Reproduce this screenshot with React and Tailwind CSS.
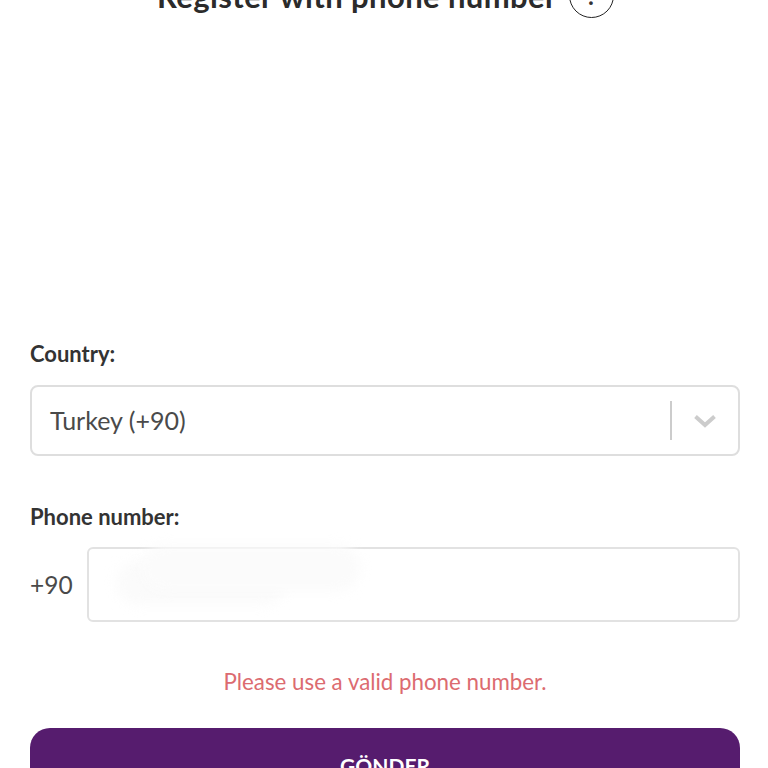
import React from "react";

const App = () => {
  return (
    <div className="h-[768px] overflow-hidden bg-white pr-[28px] pl-[30px] font-['Lato',sans-serif] text-[#333333]">
      <div className="-mt-[28px] flex h-[47px] items-center justify-center gap-[12px] pl-[1px]">
        <h1 className="text-[31px] leading-[36px] font-bold tracking-[0.4px] text-[#2b2b2b]">Register with phone number</h1>
        <div className="flex h-[45px] w-[45px] items-center justify-center rounded-full border-[1.5px] border-[#222222] text-[24px] font-bold">
          ?
        </div>
      </div>

      <label className="mt-[321px] block text-[22px] leading-[28px] font-bold text-[#333333]">Country:</label>
      <div className="mt-[17px] flex h-[71px] items-center rounded-[8px] border-2 border-[#dedede] pl-[18px]">
        <span className="flex-1 text-[25px] text-[#4a4a4a]">Turkey (+90)</span>
        <span className="h-[39px] w-[2px] bg-[#cccccc]"></span>
        <svg className="mx-[21px]" width="24" height="14" viewBox="0 0 24 14" fill="none">
          <path d="M2.5 2.5L12 11L21.5 2.5" stroke="#cccccc" strokeWidth="4" />
        </svg>
      </div>

      <label className="mt-[47px] block text-[22px] leading-[28px] font-bold text-[#333333]">Phone number:</label>
      <div className="relative mt-[16px] flex items-center">
        <span className="w-[57px] pt-[2px] text-[24.5px] text-[#4a4a4a]">+90</span>
        <div className="h-[75px] flex-1 rounded-[6px] border-2 border-[#e2e2e2]"></div>
        {/* smudge over the typed number */}
        <div className="absolute top-[14px] left-[86px] h-[44px] w-[170px] rounded-full bg-[#fbfbfb] blur-[6px]"></div>
        <div className="absolute top-[-2px] left-[112px] h-[46px] w-[218px] rounded-full bg-[#fbfbfb] blur-[6px]"></div>
      </div>

      <p className="mt-[45px] text-center text-[22.3px] leading-[30px] text-[#dc6b70]">Please use a valid phone number.</p>

      <button className="mt-[31px] flex h-[80px] w-full justify-center rounded-[20px] bg-[#561c6e] pt-[22px] text-[21px] font-bold text-white">
        GÖNDER
      </button>
    </div>
  );
};

export default App;
